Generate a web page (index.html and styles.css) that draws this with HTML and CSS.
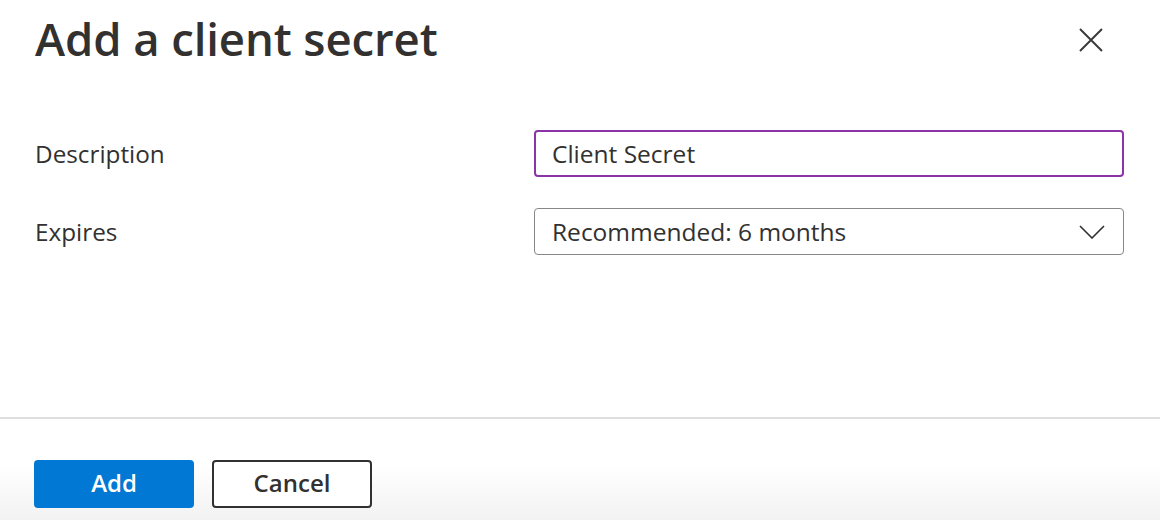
FILE: index.html
```html
<!DOCTYPE html>
<html>
<head>
<meta charset="utf-8">
<link rel="stylesheet" href="styles.css">
</head>
<body>
<div class="panel">
  <header class="head">
    <h1 class="title">Add a client secret</h1>
    <button class="close" aria-label="Close">
      <svg width="24" height="24" viewBox="0 0 24 24"><path d="M1 1 L23 23 M23 1 L1 23" stroke="#3b3a39" stroke-width="2" fill="none"/></svg>
    </button>
  </header>
  <div class="form">
    <div class="row">
      <label class="label">Description</label>
      <div class="field input">Client Secret</div>
    </div>
    <div class="row">
      <label class="label">Expires</label>
      <div class="field select">
        <span>Recommended: 6 months</span>
        <svg width="26" height="14" viewBox="0 0 26 14"><path d="M1 1 L13 13 L25 1" stroke="#323130" stroke-width="1.6" fill="none"/></svg>
      </div>
    </div>
  </div>
  <footer class="foot">
    <button class="btn primary">Add</button>
    <button class="btn secondary">Cancel</button>
  </footer>
</div>
</body>
</html>
```
FILE: styles.css
```css
* { box-sizing: border-box; }
html, body { margin: 0; padding: 0; background: #fff; }
body {
  font-family: "Open Sans", "Noto Sans", sans-serif;
  color: #323130;
  width: 1160px;
  height: 520px;
  overflow: hidden;
}
.panel { display: flex; flex-direction: column; height: 520px; }
.head {
  height: 96px;
  display: flex;
  justify-content: space-between;
  align-items: flex-start;
  padding: 0 57px 0 35px;
}
.title {
  margin: 8px 0 0;
  font-size: 45.5px;
  font-weight: 600;
  letter-spacing: -0.1px;
  color: #323130;
  line-height: 60px;
}
.close {
  border: 0;
  background: none;
  padding: 0;
  margin-top: 28px;
  width: 24px;
  height: 24px;
}
.form {
  display: flex;
  flex-direction: column;
  gap: 31px;
  padding: 34px 36px 0 35px;
  flex: 1;
}
.row { display: flex; align-items: center; justify-content: space-between; }
.label { font-size: 24.3px; color: #323130; }
.field {
  width: 590px;
  height: 47px;
  border-radius: 4px;
  display: flex;
  align-items: center;
  justify-content: space-between;
  padding: 0 18px 0 16px;
  font-size: 24.5px;
  color: #323130;
}
.input { border: 2px solid #8a34a8; }
.select { border: 1px solid #8a8886; padding-left: 17px; }
.foot {
  border-top: 2px solid #dedede;
  height: 103px;
  padding: 41px 0 0 34px;
  display: flex;
  gap: 18px;
  align-items: flex-start;
  background: linear-gradient(to bottom, #fff 0%, #fff 45%, #f2f2f2 100%);
}
.btn {
  width: 160px;
  height: 48px;
  border-radius: 4px;
  font-family: inherit;
  font-size: 24px;
  font-weight: 600;
  padding: 0 0 4px;
}
.primary { background: #0078d4; color: #fff; border: 0; }
.secondary { background: #fff; color: #323130; border: 2px solid #323130; width: 160px; }
```
